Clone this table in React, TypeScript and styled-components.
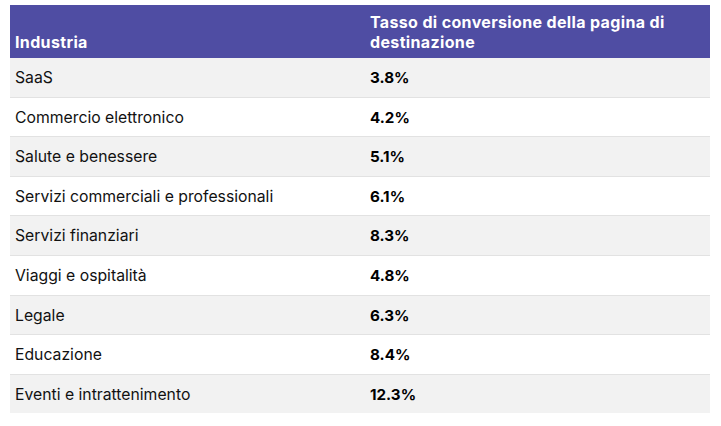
import React from 'react';
import styled, { createGlobalStyle } from 'styled-components';

const GlobalStyle = createGlobalStyle`
	body {
		margin: 0;
		background: #ffffff;
		font-family: Inter, "Noto Sans", sans-serif;
	}
`;

const Wrapper = styled.div`
	padding: 5px 11px 0 10px;
`;

const Table = styled.table`
	width: 700px;
	table-layout: fixed;
	border-collapse: collapse;
	font-size: 15.75px;
	color: #111111;
`;

const NameCol = styled.col`
	width: 355px;
`;

const RateCol = styled.col`
	width: 345px;
`;

const HeadCell = styled.th`
	background: #4f4da3;
	color: #ffffff;
	font-size: 16px;
	font-weight: 700;
	letter-spacing: 0.35px;
	text-align: left;
	vertical-align: bottom;
	padding: 7px 5px 6px 5px;
	line-height: 20px;
`;

const Row = styled.tr<{ $striped: boolean }>`
	background: ${(p) => (p.$striped ? '#f2f2f2' : '#ffffff')};
	border-bottom: 1px solid #e2e2e2;
	&:last-child {
		border-bottom: none;
	}
`;

const Cell = styled.td<{ $bold?: boolean }>`
	padding: 11px 5px 9px 5px;
	line-height: 18.6px;
	font-size: ${(p) => (p.$bold ? '15.2px' : '15.75px')};
	font-weight: ${(p) => (p.$bold ? 700 : 400)};
	color: ${(p) => (p.$bold ? '#000000' : '#111111')};
`;

const rows: [string, string][] = [
	['SaaS', '3.8%'],
	['Commercio elettronico', '4.2%'],
	['Salute e benessere', '5.1%'],
	['Servizi commerciali e professionali', '6.1%'],
	['Servizi finanziari', '8.3%'],
	['Viaggi e ospitalità', '4.8%'],
	['Legale', '6.3%'],
	['Educazione', '8.4%'],
	['Eventi e intrattenimento', '12.3%'],
];

const App: React.FC = () => {
	return (
		<React.Fragment>
			<GlobalStyle />
			<Wrapper>
				<Table>
					<colgroup>
						<NameCol />
						<RateCol />
					</colgroup>
					<thead>
						<tr>
							<HeadCell>Industria</HeadCell>
							<HeadCell>Tasso di conversione della pagina di destinazione</HeadCell>
						</tr>
					</thead>
					<tbody>
						{rows.map(([name, rate], i) => (
							<Row key={name} $striped={i % 2 === 0}>
								<Cell>{name}</Cell>
								<Cell $bold>{rate}</Cell>
							</Row>
						))}
					</tbody>
				</Table>
			</Wrapper>
		</React.Fragment>
	);
};

export default App;
